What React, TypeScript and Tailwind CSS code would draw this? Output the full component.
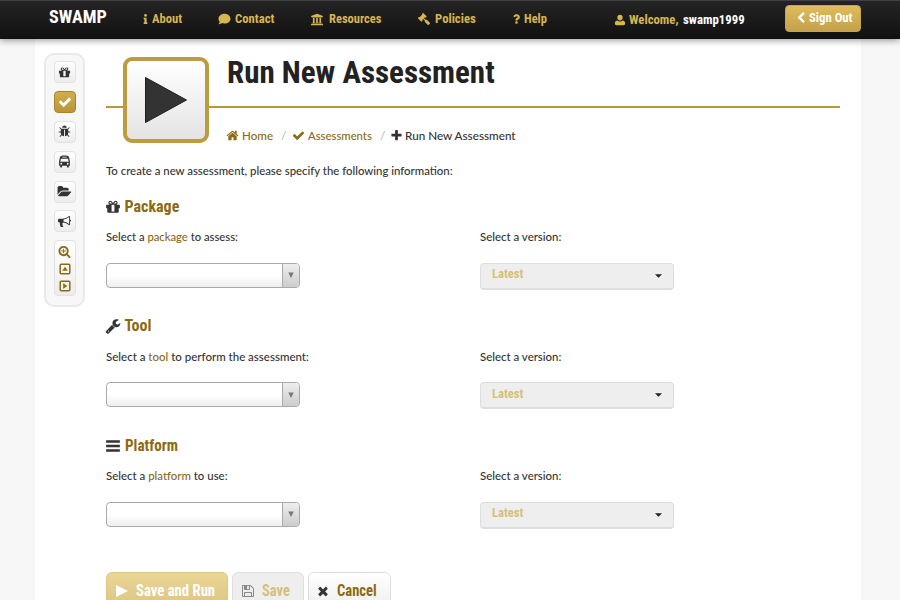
import { useLayoutEffect, useRef, type ReactNode } from "react";
import { FaComment, FaGavel, FaInfo, FaQuestion, FaUniversity } from "react-icons/fa";

const HEAD = "font-['Liberation_Sans_Narrow','Roboto_Condensed','Roboto',sans-serif] font-bold";
const BODY = "font-['Lato','Open_Sans',sans-serif] font-medium";

const paths = {
  check: "M1671 566q0 40-28 68l-724 724-136 136q-28 28-68 28t-68-28l-136-136-362-362q-28-28-28-68t28-68l136-136q28-28 68-28t68 28l294 295 656-657q28-28 68-28t68 28l136 136q28 28 28 68z",
  times: "M1490 1322q0 40-28 68l-136 136q-28 28-68 28t-68-28l-294-294-294 294q-28 28-68 28t-68-28l-136-136q-28-28-28-68t28-68l294-294-294-294q-28-28-28-68t28-68l136-136q28-28 68-28t68 28l294 294 294-294q28-28 68-28t68 28l136 136q28 28 28 68t-28 68l-294 294 294 294q28 28 28 68z",
  plus: "M1600 736v192q0 40-28 68t-68 28h-416v416q0 40-28 68t-68 28h-192q-40 0-68-28t-28-68v-416h-416q-40 0-68-28t-28-68v-192q0-40 28-68t68-28h416v-416q0-40 28-68t68-28h192q40 0 68 28t28 68v416h416q40 0 68 28t28 68z",
  left: "M1427 301l-531 531 531 531q19 19 19 45t-19 45l-166 166q-19 19-45 19t-45-19l-742-742q-19-19-19-45t19-45l742-742q19-19 45-19t45 19l166 166q19 19 19 45t-19 45z",
  gift: "M1056 1356v-716h-320v716q0 25 18 38.500t46 13.500h192q28 0 46-13.500t18-38.500zm-456-844h195l-126-161q-26-31-69-31-40 0-68 28t-28 68 28 68 68 28zm688-96q0-40-28-68t-68-28q-43 0-69 31l-125 161h194q40 0 68-28t28-68zm376 256v320q0 14-9 23t-23 9h-96v416q0 40-28 68t-68 28h-1088q-40 0-68-28t-28-68v-416h-96q-14 0-23-9t-9-23v-320q0-14 9-23t23-9h440q-93 0-158.500-65.500t-65.500-158.500 65.500-158.500 158.500-65.500q107 0 168 77l128 165 128-165q61-77 168-77 93 0 158.500 65.500t65.500 158.500-65.500 158.500-158.500 65.500h440q14 0 23 9t9 23z",
  bug: "M1696 960q0 26-19 45t-45 19h-224q0 171-67 290l208 209q19 19 19 45t-19 45q-18 19-45 19t-45-19l-198-197q-5 5-15 13t-42 28.500-65 36.500-82 29-97 13v-896h-128v896q-51 0-101.500-13.500t-87-33-66-39-43.500-32.500l-15-14-183 207q-20 21-48 21-24 0-43-16-19-18-20.500-44.500t15.500-46.500l202-227q-58-114-58-274h-224q-26 0-45-19t-19-45 19-45 45-19h224v-294l-173-173q-19-19-19-45t19-45 45-19 45 19l173 173h844l173-173q19-19 45-19t45 19 19 45-19 45l-173 173v294h224q26 0 45 19t19 45zm-480-576h-640q0-133 93.500-226.500t226.500-93.500 226.500 93.500 93.500 226.500z",
  save: "M512 1536h768v-384h-768v384zm896 0h128v-896q0-14-10-38.500t-20-34.500l-281-281q-10-10-34-20t-39-10v416q0 40-28 68t-68 28h-576q-40 0-68-28t-28-68v-416h-128v1280h128v-416q0-40 28-68t68-28h832q40 0 68 28t28 68v416zm-384-928v-320q0-13-9.500-22.500t-22.500-9.500h-192q-13 0-22.500 9.500t-9.500 22.500v320q0 13 9.500 22.500t22.500 9.500h192q13 0 22.500-9.500t9.500-22.500zm640 32v928q0 40-28 68t-68 28h-1344q-40 0-68-28t-28-68v-1344q0-40 28-68t68-28h928q40 0 88 20t76 48l280 280q28 28 48 76t20 88z",
  horn: "M1664 640q53 0 90.500 37.500t37.500 90.500-37.500 90.500-90.500 37.500v384q0 52-38 90t-90 38q-417-347-812-380-58 19-91 66t-31 100.500 40 92.500q-20 33-23 65.500t6 58 33.500 55 48 50 61.500 50.500q-29 58-111.500 83t-168.500 11.500-132-55.500q-7-23-29.500-87.500t-32-94.500-23-89-15-101 3.500-98.500 22-110.500h-122q-66 0-113-47t-47-113v-192q0-66 47-113t113-47h480q435 0 896-384 52 0 90 38t38 90v384zm-128 604v-954q-394 302-768 343v270q377 42 768 341z",
  home: "M1472 992v480q0 26-19 45t-45 19h-384v-384h-256v384h-384q-26 0-45-19t-19-45v-480q0-1 .5-3t.5-3l575-474 575 474q1 2 1 6zm223-69l-62 74q-8 9-21 11h-3q-13 0-21-7l-692-577-692 577q-12 8-24 7-13-2-21-11l-62-74q-8-10-7-23.500t11-21.500l719-599q32-26 76-26t76 26l244 204v-195q0-14 9-23t23-9h192q14 0 23 9t9 23v408l219 182q10 8 11 21.500t-7 23.500z",
  wrench: "M448 1472q0-26-19-45t-45-19-45 19-19 45 19 45 45 19 45-19 19-45zm644-420l-682 682q-37 37-90 37-52 0-91-37l-106-108q-38-36-38-90 0-53 38-91l681-681q39 98 114.500 173.500t173.500 114.500zm634-435q0 39-23 106-47 134-164.500 217.500t-258.500 83.500q-185 0-316.500-131.500t-131.500-316.500 131.500-316.500 316.500-131.500q58 0 121.500 16.500t107.500 46.500q16 11 16 28t-16 28l-293 169v224l193 107q5-3 79-48.500t135.500-81 70.500-35.500q15 0 23.500 10t8.500 25z",
  folder: "M1815 952q0 31-31 66l-336 396q-43 51-120.500 86.500t-143.500 35.500h-1088q-34 0-60.500-13t-26.500-43q0-31 31-66l336-396q43-51 120.500-86.500t143.500-35.500h1088q34 0 60.500 13t26.500 43zm-343-344v160h-832q-94 0-197 47.500t-164 119.500l-337 396-5 6q0-4-.5-12.500t-.5-12.500v-960q0-92 66-158t158-66h320q92 0 158 66t66 158v32h544q92 0 158 66t66 158z",
  zoom: "M1088 800v64q0 13-9.500 22.500t-22.500 9.500h-224v224q0 13-9.500 22.500t-22.500 9.500h-64q-13 0-22.500-9.500t-9.500-22.500v-224h-224q-13 0-22.500-9.500t-9.500-22.500v-64q0-13 9.500-22.500t22.500-9.500h224v-224q0-13 9.500-22.500t22.500-9.500h64q13 0 22.500 9.500t9.500 22.500v224h224q13 0 22.500 9.500t9.500 22.500zm128 32q0-185-131.500-316.500t-316.500-131.500-316.500 131.500-131.500 316.500 131.500 316.500 316.500 131.500 316.500-131.500 131.500-316.500zm512 832q0 53-37.500 90.500t-90.500 37.500q-54 0-90-38l-343-342q-179 124-399 124-143 0-273.500-55.500t-225-150-150-225-55.500-273.500 55.500-273.500 150-225 225-150 273.500-55.500 273.500 55.500 225 150 150 225 55.500 273.500q0 220-124 399l343 343q37 37 37 90z",
  bars: "M128 260h1536v270H128zM128 760h1536v270H128zM128 1260h1536v270H128z",
  user: "M896 128c250 0 400 170 400 400s-150 460-400 460-400-230-400-460 150-400 400-400zM500 960c120 110 240 150 396 150s276-40 396-150c250 30 372 190 372 450 0 180-100 254-250 254H378c-150 0-250-74-250-254 0-260 122-420 372-450z",
};

function Icon({ name, className }: { name: keyof typeof paths; className: string }) {
  return (
    <svg viewBox="0 0 1792 1792" fill="currentColor" className={`shrink-0 overflow-visible ${className}`}>
      <path d={paths[name]} />
    </svg>
  );
}

/* Front view of a bus: open windshield, two headlights, two wheels. */
function BusIcon() {
  return (
    <svg viewBox="0 0 24 24" className="size-[13px] shrink-0">
      <path
        fillRule="evenodd"
        fill="currentColor"
        d="M12 1c5 0 8 .8 8.500 3.500L21.500 9c.4 1.500.5 2.500.5 4v7h-2v1.500a1.700 1.700 0 0 1-3.500 0V20h-9v1.500a1.700 1.700 0 0 1-3.500 0V20H2v-7c0-1.500.1-2.500.5-4l1-4.500C4 1.800 7 1 12 1zM8 3.300v1.500h8V3.300zM5.400 7 4.300 12.500h15.400L18.600 7zM6 14.500a1.700 1.700 0 1 0 0 3.400 1.700 1.700 0 0 0 0-3.400zm12 0a1.700 1.700 0 1 0 0 3.400 1.700 1.700 0 0 0 0-3.400z"
      />
    </svg>
  );
}

/* A line of text condensed or widened to fill the width of its box. */
function Fit({ className, children }: { className: string; children: ReactNode }) {
  const box = useRef<HTMLSpanElement>(null);
  const text = useRef<HTMLSpanElement>(null);
  useLayoutEffect(() => {
    if (!box.current || !text.current) return;
    text.current.style.transform = `scaleX(${box.current.clientWidth / text.current.offsetWidth})`;
  }, []);
  return (
    <span ref={box} className={`block shrink-0 whitespace-nowrap ${className}`}>
      <span ref={text} className="inline-block origin-left">{children}</span>
    </span>
  );
}

function Header() {
  return (
    <header className={`relative z-10 flex h-[39px] items-center border-t border-[#414141] bg-gradient-to-b from-[#242424] to-[#111] pb-[2px] pl-[49px] text-[13px] leading-[16px] text-[#d8b54f] shadow-[0_1px_7px_rgba(0,0,0,0.45)] ${HEAD}`}>
      <Fit className="mb-[4px] w-[58px] text-[17.5px] leading-[20px] text-white">SWAMP</Fit>
      <FaInfo className="ml-[35px] h-[10px] w-[7px]" />
      <Fit className="ml-[3px] w-[30px]">About</Fit>
      <FaComment className="ml-[36px] h-[12px] w-[13px]" />
      <Fit className="ml-[4px] w-[39px]">Contact</Fit>
      <FaUniversity className="ml-[36px] h-[13px] w-[14px]" />
      <Fit className="ml-[5px] w-[52px]">Resources</Fit>
      <FaGavel className="ml-[37px] size-[12px] -scale-x-100" />
      <Fit className="ml-[5px] w-[41px]">Policies</Fit>
      <FaQuestion className="ml-[37px] h-[10px] w-[7px]" />
      <Fit className="ml-[4px] w-[23px]">Help</Fit>
      <Icon name="user" className="ml-[67px] mt-[2px] size-[12px]" />
      <Fit className="ml-[3px] mt-[2px] w-[50px]">Welcome,</Fit>
      <Fit className="ml-[4px] mt-[2px] w-[62px] text-white">swamp1999</Fit>
      <button className="mb-[1px] ml-[40px] flex h-[27px] w-[76px] shrink-0 items-center rounded-[4px] border border-[#c7a548] bg-gradient-to-b from-[#dfbd5b] to-[#c4a14b] pb-[1px] pl-[9px] text-white">
        <Icon name="left" className="size-[12px]" />
        <Fit className="ml-[2px] w-[43px]">Sign Out</Fit>
      </button>
    </header>
  );
}

const tile = "flex size-[22px] shrink-0 items-center justify-center rounded-[4px] border";
const plain = "border-[#e2e2e2] bg-gradient-to-b from-white to-[#ececec] text-[#333]";

function Sidebar() {
  return (
    <aside className="ml-[9px] mt-[13.5px] flex h-[254px] w-[41px] shrink-0 flex-col items-center gap-[7.900px] rounded-[10px] border-2 border-[#e9e9e9] bg-[#f7f7f7] pt-[6.500px]">
      <div className={`${tile} ${plain}`}><Icon name="gift" className="size-[13px]" /></div>
      <div className={`${tile} border-[#a9842b] bg-gradient-to-b from-[#d0ae4c] to-[#b9963a] text-white`}><Icon name="check" className="size-[14px]" /></div>
      <div className={`${tile} ${plain}`}><Icon name="bug" className="size-[13px]" /></div>
      <div className={`${tile} ${plain}`}><BusIcon /></div>
      <div className={`${tile} ${plain}`}><Icon name="folder" className="size-[13px]" /></div>
      <div className={`${tile} ${plain}`}><Icon name="horn" className="size-[13px]" /></div>
      <div className="flex h-[56px] w-[22px] flex-col items-center gap-[5px] rounded-[4px] border border-[#e2e2e2] bg-gradient-to-b from-white to-[#ececec] pt-[4px] text-[#8c6a10]">
        <Icon name="zoom" className="size-[13px]" />
        <svg viewBox="0 0 12 12" className="size-[12px] shrink-0">
          <rect x="1.200" y="1.200" width="9.600" height="9.600" rx="1" fill="none" stroke="currentColor" strokeWidth="1.500" />
          <path d="M6 3.700 8.800 7.800H3.200z" fill="currentColor" />
        </svg>
        <svg viewBox="0 0 12 12" className="size-[12px] shrink-0">
          <rect x="1.200" y="1.200" width="9.600" height="9.600" rx="1" fill="none" stroke="currentColor" strokeWidth="1.500" />
          <path d="M8.300 6 4.200 8.800V3.200z" fill="currentColor" />
        </svg>
      </div>
    </aside>
  );
}

function Section({ icon, title, titleWidth, label }: { icon: "gift" | "wrench" | "bars"; title: string; titleWidth: string; label: ReactNode }) {
  return (
    <section className="h-[119.5px]">
      <h2 className={`flex h-[20px] items-center text-[16px] leading-[20px] text-[#8c6a10] ${HEAD}`}>
        <Icon name={icon} className="-ml-px size-[16px] text-[#333]" />
        <Fit className={`ml-[4px] ${titleWidth}`}>{title}</Fit>
      </h2>
      <div className="mt-[10.500px] flex">
        <div className="w-[374.5px]">
          {label}
          <div className="mt-[15.500px] flex h-[25px] w-[194px] overflow-hidden rounded-[4px] border border-[#aaa] bg-gradient-to-b from-white from-50% to-[#eee]">
            <div className="ml-auto flex w-[17px] items-center justify-center border-l border-[#aaa] bg-gradient-to-b from-[#eee] to-[#ccc]">
              <svg viewBox="0 0 6 6" className="size-[6px]"><path d="M.3 .5h5.400L3 6z" fill="#777" /></svg>
            </div>
          </div>
        </div>
        <div>
          <Fit className="w-[81px]">Select a version:</Fit>
          <div className="mt-[15.500px] flex h-[27px] w-[193.500px] items-center rounded-[4px] border border-b-2 border-[#dedede] bg-[#eee] pl-[10.500px] pr-[11px]">
            <Fit className={`mb-[3px] w-[31px] text-[13px] leading-[16px] text-[#d6bf7c] ${HEAD}`}>Latest</Fit>
            <svg viewBox="0 0 8 4" className="ml-auto h-[4px] w-[7px]"><path d="M0 0h8L4 4z" fill="#222" /></svg>
          </div>
        </div>
      </div>
    </section>
  );
}

const gold = "text-[#8c6a10]";
const button = "flex h-[38px] shrink-0 items-center rounded-[6px] border text-[16px] leading-[20px]";

export default function App() {
  return (
    <div className={`h-[600px] w-[900px] overflow-hidden bg-[#f7f7f7] text-[12px] leading-[20px] text-[#333] ${BODY}`}>
      <Header />
      <div className="ml-[35px] flex h-[561px] w-[826px] overflow-hidden bg-white">
        <Sidebar />
        <main className="ml-[20.500px] mt-[17.500px] w-[734px] shrink-0">
          <div className="flex h-[86px] items-start">
            <div className="mt-[49.500px] h-[2px] w-[17.500px] bg-[#b8963a]" />
            <div className="flex size-[86px] shrink-0 items-center justify-center rounded-[9px] border-[4px] border-[#bd9c41] bg-gradient-to-b from-white to-[#e4e4e4]">
              <svg viewBox="0 0 42 46" className="h-[46px] w-[42px]"><path d="M.5 .5 41.500 23 .5 45.500z" fill="#333" stroke="#1e1e1e" /></svg>
            </div>
            <div className="flex-1">
              <h1 className={`ml-[18px] h-[49.500px] text-[31px] leading-[32px] text-[#222] ${HEAD}`}><Fit className="w-[268px]">Run New Assessment</Fit></h1>
              <div className="h-[2px] bg-[#b8963a]" />
              <nav className="ml-[17px] mt-[17.500px] flex h-[20px] items-center">
                <Icon name="home" className={`size-[13px] ${gold}`} />
                <Fit className={`ml-[3px] w-[31px] ${gold}`}>Home</Fit>
                <span className="ml-[8px] w-[5px] text-[#bbb]">/</span>
                <Icon name="check" className={`ml-[6px] size-[13px] ${gold}`} />
                <Fit className={`ml-[3px] w-[64px] ${gold}`}>Assessments</Fit>
                <span className="ml-[8px] w-[5px] text-[#bbb]">/</span>
                <Icon name="plus" className="ml-[5px] size-[13px]" />
                <Fit className="ml-[2px] w-[111px]">Run New Assessment</Fit>
              </nav>
            </div>
          </div>
          <Fit className="mt-[18px] w-[347px]">To create a new assessment, please specify the following information:</Fit>
          <div className="mt-[16px]">
            <Section icon="gift" title="Package" titleWidth="w-[55px]" label={<Fit className="w-[132px]">Select a <span className={gold}>package</span> to assess:</Fit>} />
            <Section icon="wrench" title="Tool" titleWidth="w-[27px]" label={<Fit className="w-[203px]">Select a <span className={gold}>tool</span> to perform the assessment:</Fit>} />
            <Section icon="bars" title="Platform" titleWidth="w-[53px]" label={<Fit className="w-[122px]">Select a <span className={gold}>platform</span> to use:</Fit>} />
          </div>
          <div className={`mt-[17px] flex gap-[4px] ${HEAD}`}>
            <button className={`${button} w-[122px] border-[#dec585] bg-gradient-to-b from-[#ebd697] to-[#dcc37f] pl-[9px] text-white`}>
              <svg viewBox="0 0 12 12" className="size-[12px]"><path d="M0 0 12 6 0 12z" fill="currentColor" /></svg>
              <Fit className="ml-[8px] w-[79px]">Save and Run</Fit>
            </button>
            <button className={`${button} w-[72px] border-[#dedede] bg-[#eee] pl-[8px] text-[#d6bf7c]`}>
              <Icon name="save" className="size-[14px] text-[#888]" />
              <Fit className="ml-[7px] w-[28px]">Save</Fit>
            </button>
            <button className={`${button} w-[83px] border-[#dedede] bg-gradient-to-b from-white to-[#eee] pl-[7px] ${gold}`}>
              <Icon name="times" className="size-[14px] text-[#333]" />
              <Fit className="ml-[7px] w-[40px]">Cancel</Fit>
            </button>
          </div>
        </main>
      </div>
    </div>
  );
}
